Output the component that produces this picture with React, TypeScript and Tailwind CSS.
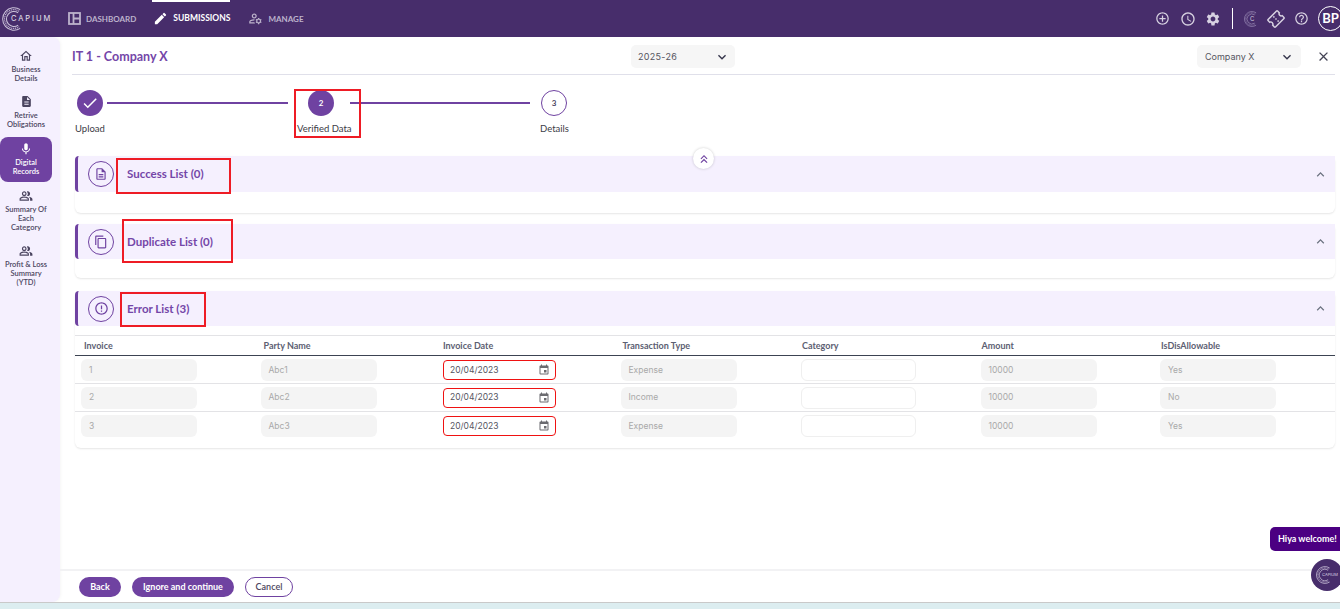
import React from "react";
import { MdOutlineHome, MdDescription, MdMic, MdOutlinePeopleAlt, MdEdit, MdOutlineManageAccounts, MdAddCircleOutline, MdSettings, MdHelpOutline, MdErrorOutline, MdKeyboardArrowDown, MdKeyboardArrowUp, MdKeyboardDoubleArrowUp, MdClose, MdCheck, MdSchedule, MdEvent, MdOutlineDescription, MdContentCopy, MdOutlineConfirmationNumber } from "react-icons/md";

function Logo({ size = 32, color = "#c9c0d8" }: { size?: number; color?: string }) {
  return (
    <svg width={size} height={size} viewBox="0 0 32 32" fill="none">
      {[15, 12.5, 10].map((r, i) => (
        <path key={r} d={`M ${16 + r * 0.55} ${16 - r * 0.83} A ${r} ${r} 0 1 0 ${16 + r * 0.55} ${16 + r * 0.83}`} stroke={color} strokeWidth="1.4" strokeDasharray={i === 1 ? "1.5 1" : undefined} />
      ))}
    </svg>
  );
}

function DashIcon() {
  return (
    <svg width="13" height="13" viewBox="0 0 13 13" fill="none" stroke="currentColor" strokeWidth="1.8">
      <rect x="1" y="1" width="11" height="11" />
      <path d="M5.5 1v11M5.5 6.5H12" />
    </svg>
  );
}

function NavItem({ icon, label, active, cls }: { icon: React.ReactNode; label: string; active?: boolean; cls: string }) {
  return (
    <div className={`relative flex h-[37px] items-center gap-[5px] font-bold ${active ? "text-[8.5px] text-white" : "text-[8px] text-[#bdb3cc]"} ${cls}`}>
      {active && <div className="absolute left-0 right-0 top-0 h-[2px] bg-white" />}
      {icon}
      <span>{label}</span>
    </div>
  );
}

function SideItem({ icon, lines, active, cls = "" }: { icon: React.ReactNode; lines: string[]; active?: boolean; cls?: string }) {
  return (
    <div className={`flex w-[52px] flex-col items-center rounded-[8px] py-[5px] text-center text-[7.5px] font-semibold leading-[9.3px] ${active ? "bg-[#6f42a1] font-bold text-white" : "text-[#4b4560]"} ${cls}`}>
      <div className="mb-[2px] flex h-[14px] items-center">{icon}</div>
      {lines.map((l) => (
        <div key={l}>{l}</div>
      ))}
    </div>
  );
}

function Step({ done, n, filled }: { done?: boolean; n: string; filled?: boolean }) {
  return (
    <div className={`flex h-[26px] w-[26px] items-center justify-center rounded-full text-[8px] font-bold ${filled ? "bg-[#6f42a1] text-white" : "border border-[#6f42a1] bg-white text-[#4b4560]"}`}>
      {done ? <MdCheck size={18} color="#fff" /> : n}
    </div>
  );
}

function SectionHeader({ icon, title, h = "h-[35px]" }: { icon: React.ReactNode; title: string; h?: string }) {
  return (
    <div className={`flex ${h} items-center rounded-l-[4px] border-l-[3px] border-[#6f42a1] bg-[#f5f0fe] pr-[7px]`}>
      <div className="ml-[10px] flex h-[26px] w-[26px] items-center justify-center rounded-full border border-[#6f42a1] text-[#6f42a1]">{icon}</div>
      <div className="ml-[13px] flex-1 text-[11.5px] font-bold text-[#7446a8]">{title}</div>
      <MdKeyboardArrowUp size={15} color="#6b7280" />
    </div>
  );
}

function Ghost({ text }: { text: string }) {
  return <div className="flex h-[22px] w-[116px] items-center rounded-[6px] bg-[#f4f4f4] pl-[8px] font-['Inter'] text-[8.5px] text-[#a9a9a9]">{text}</div>;
}

const cols = ["Invoice", "Party Name", "Invoice Date", "Transaction Type", "Category", "Amount", "IsDisAllowable"];
const rows = [
  ["1", "Abc1", "Expense", "10000", "Yes"],
  ["2", "Abc2", "Income", "10000", "No"],
  ["3", "Abc3", "Expense", "10000", "Yes"],
];

function Row({ r }: { r: string[] }) {
  return (
    <div className="grid h-[28px] grid-cols-[repeat(7,179.5px)] items-center border-b border-[#e3e3e6] pl-[6px] first:pt-[1px] last:border-b-0">
      <Ghost text={r[0]} />
      <Ghost text={r[1]} />
      <div className="ml-[3px] flex h-[20px] w-[113px] items-center justify-between rounded-[4px] border border-[#ef1212] pl-[6px] pr-[5px] font-['Inter'] text-[8.5px] text-[#55555f]">
        20/04/2023
        <MdEvent size={12} color="#6b6b70" />
      </div>
      <div className="ml-[1px]"><Ghost text={r[2]} /></div>
      <div className="ml-[2px] h-[22px] w-[115px] rounded-[6px] border border-[#efefef] bg-white" />
      <div className="ml-[2px]"><Ghost text={r[3]} /></div>
      <div className="ml-[2px]"><Ghost text={r[4]} /></div>
    </div>
  );
}

function RedBox({ cls }: { cls: string }) {
  return <div className={`pointer-events-none absolute border-2 border-[#ee1c25] ${cls}`} />;
}

export default function App() {
  return (
    <div className="relative flex h-[609px] w-[1340px] flex-col overflow-hidden bg-white font-['Lato','Noto_Sans',sans-serif]">
      <header className="flex h-[37px] shrink-0 items-center bg-[#472d6b] pl-[2px]">
        <div className="flex w-[66px] shrink-0 items-center">
          <Logo size={24} />
          <span className="ml-[-15px] font-['Inter'] text-[7.5px] tracking-[1.9px] text-[#e8e4ef]">CAPIUM</span>
        </div>
        <div className="flex">
          <NavItem cls="ml-0" icon={<DashIcon />} label="DASHBOARD" />
          <NavItem cls="ml-[16px] pl-[1px]" active icon={<MdEdit size={15} />} label="SUBMISSIONS" />
          <NavItem cls="ml-[18px]" icon={<MdOutlineManageAccounts size={15} />} label="MANAGE" />
        </div>
        <div className="ml-auto flex items-center text-[#d7d1e1]">
          <MdAddCircleOutline size={15} />
          <MdSchedule size={16} className="ml-[10px]" />
          <MdSettings size={16} className="ml-[9px]" />
          <div className="ml-[11px] h-[21px] w-px bg-white" />
          <div className="relative ml-[11px] flex h-[16px] w-[16px] items-center justify-center">
            <Logo size={16} color="#9a8ab4" />
            <span className="absolute left-[6px] top-[3px] font-['Inter'] text-[6px] text-[#cfc7dc]">C</span>
          </div>
          <MdOutlineConfirmationNumber size={18} className="ml-[7px] rotate-[-45deg]" />
          <MdHelpOutline size={15} className="ml-[9px]" />
          <div className="ml-[6px] flex h-[25px] w-[25px] shrink-0 translate-x-[3px] items-center justify-center rounded-full border border-white text-[13px] font-bold text-white">BP</div>
        </div>
      </header>

      <div className="flex min-h-0 flex-1">
        <aside className="flex w-[60px] shrink-0 flex-col items-center gap-[1px] rounded-r-[8px] bg-[#f5f0fe] pr-[8px] pt-[7px] shadow-[1px_0_3px_rgba(0,0,0,0.04)]">
          <SideItem icon={<MdOutlineHome size={14} />} lines={["Business", "Details"]} />
          <SideItem icon={<MdDescription size={13} />} lines={["Retrive", "Obligations"]} />
          <SideItem cls="mt-[2px]" active icon={<MdMic size={14} />} lines={["Digital", "Records"]} />
          <SideItem cls="mt-[1px]" icon={<MdOutlinePeopleAlt size={14} />} lines={["Summary Of", "Each", "Category"]} />
          <SideItem icon={<MdOutlinePeopleAlt size={14} />} lines={["Profit & Loss", "Summary", "(YTD)"]} />
        </aside>

        <main className="flex min-w-0 flex-1 flex-col">
          <div className="relative ml-[12px] mr-[5px] flex h-[38px] shrink-0 items-center border-b border-[#e0e0ea] pt-[4px]">
            <div className="text-[12.5px] font-bold text-[#7446a8]">IT 1 - Company X</div>
            <div className="absolute left-[559px] top-[8px] flex h-[23px] w-[104px] items-center justify-between rounded-[5px] bg-[#f6f6f6] pl-[7px] pr-[5px] font-['Inter'] text-[9px] tracking-[0.3px] text-[#55555f]">
              2025-26
              <MdKeyboardArrowDown size={16} color="#34344a" />
            </div>
            <div className="absolute left-[1125px] top-[8px] flex h-[23px] w-[104px] items-center justify-between rounded-[5px] bg-[#f6f6f6] pl-[8px] pr-[6px] font-['Inter'] text-[9px] text-[#55555f]">
              Company X
              <MdKeyboardArrowDown size={16} color="#34344a" />
            </div>
            <MdClose size={15} color="#444455" className="absolute left-[1244px] top-[12px]" />
          </div>

          <div className="relative ml-[15px] mr-[5px] mt-[15px] h-[41px] shrink-0">
            <div className="absolute left-[2px] top-0"><Step done filled n="" /></div>
            <div className="absolute left-[32px] top-[12px] h-[2px] w-[181px] bg-[#6f42a1]" />
            <div className="absolute left-[275px] top-[12px] h-[2px] w-[180px] bg-[#6f42a1]" />
            <div className="absolute left-[233px] top-0"><Step filled n="2" /></div>
            <div className="absolute left-[466px] top-0"><Step n="3" /></div>
            <div className="absolute left-0 top-[32px] text-[9.5px] text-[#3c3c46]">Upload</div>
            <div className="absolute left-[222px] top-[32px] text-[9.5px] text-[#3c3c46]">Verified Data</div>
            <div className="absolute left-[465px] top-[32px] text-[9.5px] text-[#3c3c46]">Details</div>
          </div>

          <div className="ml-[15px] mr-[5px] mt-[25px] flex flex-col">
            <section className="h-[57px] rounded-[6px] shadow-[0_1px_2px_rgba(0,0,0,0.1)]">
              <SectionHeader h="h-[36px]" icon={<MdOutlineDescription size={14} />} title="Success List (0)" />
            </section>
            <section className="mt-[11px] h-[54px] rounded-[6px] shadow-[0_1px_2px_rgba(0,0,0,0.1)]">
              <SectionHeader icon={<MdContentCopy size={14} />} title="Duplicate List (0)" />
            </section>
            <section className="mt-[13px] h-[157px] rounded-[6px] shadow-[0_1px_2px_rgba(0,0,0,0.1)]">
              <SectionHeader icon={<MdErrorOutline size={15} />} title="Error List (3)" />
              <div className="mt-[9px] grid h-[21px] grid-cols-[repeat(7,179.5px)] items-center border-b border-t border-b-[#3c4352] border-t-[#e3e3e6] pl-[9px] text-[9px] font-bold text-[#5c6072]">
                {cols.map((c) => (
                  <div key={c}>{c}</div>
                ))}
              </div>
              <div>
                {rows.map((r) => (
                  <Row key={r[0]} r={r} />
                ))}
              </div>
            </section>
          </div>

          <div className="mt-auto flex h-[33px] shrink-0 items-center gap-[11px] border-t-2 border-[#f2f2f4] pl-[19px]">
            <div className="flex h-[20px] w-[42px] items-center justify-center rounded-full bg-[#6f42a1] text-[9px] font-bold text-white">Back</div>
            <div className="flex h-[20px] w-[102px] items-center justify-center rounded-full bg-[#6f42a1] text-[9px] font-bold text-white">Ignore and continue</div>
            <div className="flex h-[20px] w-[48px] items-center justify-center rounded-full border border-[#6f42a1] text-[9px] font-semibold text-[#4b4560]">Cancel</div>
          </div>
        </main>
      </div>
      <div className="h-[7px] shrink-0 border-t border-[#c9c9c9] bg-[#dcedf0]" />

      <RedBox cls="left-[294px] top-[89px] h-[49px] w-[67px]" />
      <RedBox cls="left-[116px] top-[158px] h-[36px] w-[115px]" />
      <RedBox cls="left-[122px] top-[219px] h-[44px] w-[111px]" />
      <RedBox cls="left-[120px] top-[292px] h-[35px] w-[86px]" />

      <div className="absolute left-[693px] top-[148px] flex h-[21px] w-[21px] items-center justify-center rounded-full bg-white shadow-[0_0_3px_rgba(0,0,0,0.2)]">
        <MdKeyboardDoubleArrowUp size={14} color="#6f42a1" />
      </div>
      <div className="absolute left-[1270px] top-[527px] flex h-[24px] w-[75px] items-center rounded-[5px] bg-[#4b0082] pl-[8px] text-[9px] font-bold text-white">Hiya welcome!</div>
      <div className="absolute left-[1311px] top-[559px] flex h-[32px] w-[32px] items-center justify-center overflow-hidden rounded-full bg-[#472d6b]">
        <Logo size={18} />
        <span className="ml-[-12px] font-['Inter'] text-[4px] text-[#d7d1e1]">CAPIUM</span>
      </div>
    </div>
  );
}
